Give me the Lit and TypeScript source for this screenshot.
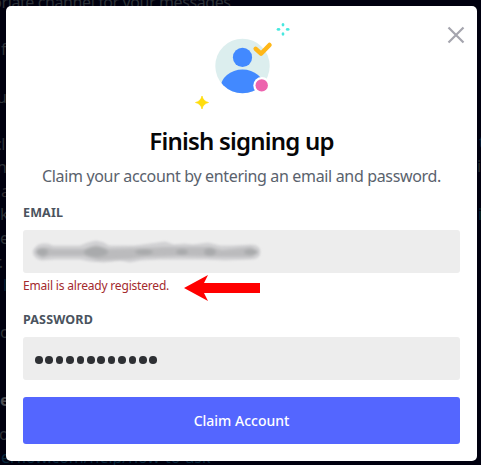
import { LitElement, html, css } from "lit";
import { customElement, property } from "lit/decorators.js";
import { styleMap } from "lit/directives/style-map.js";

interface Fragment {
  text: string;
  x: number;
  y: number;
  color?: string;
  weight?: number;
  spacing?: number;
}

const FRAGMENTS: Fragment[] = [
  { text: "priate channel for your messages", x: -8, y: 8 },
  { text: "f", x: 1, y: 55 },
  { text: "u", x: -3, y: 103 },
  { text: "cl", x: -6, y: 150 },
  { text: "n", x: -3, y: 173 },
  { text: "a", x: 1, y: 197, color: "#302c31" },
  { text: "k", x: 0, y: 220 },
  { text: "e", x: 0, y: 244 },
  { text: "r.", x: -5, y: 268 },
  { text: "l", x: 3, y: 291, color: "#052036" },
  { text: "c", x: 0, y: 338 },
  { text: "e", x: 0, y: 406, color: "#4a4b50", weight: 700 },
  { text: "o", x: -1, y: 440 },
  { text: "erflow.com/help/how-to-ask", x: 1, y: 463, color: "#08293f", spacing: -0.05 },
  { text: "t", x: 479, y: 148, color: "#052a38" },
  { text: "i", x: 477, y: 172, color: "#26292c" },
  { text: "i", x: 478, y: 220, color: "#052a38" },
];

@customElement("page-backdrop")
class PageBackdrop extends LitElement {
  static styles = css`
    :host {
      position: absolute;
      inset: 0;
      overflow: hidden;
      background: #00000f;
      font: 16px/20px "Noto Sans", sans-serif;
      letter-spacing: -0.4px;
      color: #2d3238;
    }
    .fragment {
      position: absolute;
      white-space: nowrap;
    }
  `;
  render() {
    return FRAGMENTS.map(
      (f) => html`<span
        class="fragment"
        style=${styleMap({
          left: `${f.x}px`,
          top: `${f.y - 16}px`,
          color: f.color ?? "",
          fontWeight: f.weight ? String(f.weight) : "",
          letterSpacing: f.spacing !== undefined ? `${f.spacing}px` : "",
        })}
        >${f.text}</span
      >`
    );
  }
}

@customElement("form-field")
class FormField extends LitElement {
  @property() label = "";

  static styles = css`
    :host {
      display: block;
    }
    .label {
      font-size: 12.5px;
      font-weight: 700;
      line-height: 16px;
      letter-spacing: 0.15px;
      color: #4a535e;
      height: 16px;
      margin-bottom: 9px;
      text-transform: uppercase;
    }
    .box {
      display: flex;
      align-items: center;
      height: 43px;
      border-radius: 3px;
      background: #ededed;
      padding-left: 8px;
      box-sizing: border-box;
    }
  `;
  render() {
    return html`<div class="label">${this.label}</div>
      <div class="box"><slot></slot></div>`;
  }
}

@customElement("app-root")
class AppRoot extends LitElement {
  static styles = css`
    :host {
      display: block;
      position: relative;
      width: 481px;
      height: 465px;
      padding: 6px 4px 4px 6px;
      box-sizing: border-box;
      overflow: hidden;
      font-family: "Noto Sans", sans-serif;
    }
    .modal {
      position: relative;
      display: flex;
      flex-direction: column;
      box-sizing: border-box;
      height: 455px;
      padding: 0 17px;
      border-radius: 5px;
      background: #fff;
    }
    .close {
      position: absolute;
      right: 12px;
      top: 20px;
      width: 18px;
      height: 18px;
      padding: 0;
      border: 0;
      background: none;
    }
    .close svg,
    .art {
      display: block;
    }
    .art {
      align-self: center;
      margin-top: 14px;
    }
    h1 {
      margin: 12px 0 0;
      font-size: 24px;
      font-weight: 600;
      line-height: 30px;
      text-align: center;
      color: #060607;
      white-space: nowrap;
      letter-spacing: -0.8px;
    }
    .lead {
      margin: 9px 0 0;
      font-size: 16px;
      line-height: 22px;
      text-align: center;
      color: #5a626d;
      white-space: nowrap;
      letter-spacing: -0.34px;
    }
    .email {
      margin-top: 18px;
    }
    .notice {
      display: flex;
      height: 26px;
      gap: 14px;
    }
    .error {
      width: 147px;
      font-size: 12px;
      line-height: 16px;
      margin-top: 5px;
      color: #a32a2d;
      white-space: nowrap;
      letter-spacing: -0.19px;
    }
    .arrow {
      margin-top: 2px;
    }
    .password {
      margin-top: 13px;
    }
    .dots {
      display: flex;
      gap: 2.8px;
      margin: 3px 0 0 4px;
    }
    .dot {
      width: 7.6px;
      height: 7.6px;
      border-radius: 50%;
      background: #2e3034;
    }
    .submit {
      margin-top: 17px;
      height: 47px;
      flex: none;
      border: 0;
      border-radius: 3px;
      background: #5466ff;
      color: #fff;
      font: 500 14px/20px "Noto Sans", sans-serif;
    }
  `;

  render() {
    return html`
      <page-backdrop></page-backdrop>
      <div class="modal">
        <button class="close" aria-label="Close">
          <svg width="18" height="18" viewBox="0 0 18 18">
            <path d="M1.5 1.5 16.5 16.5M16.5 1.5 1.5 16.5" stroke="#a5a5ae" stroke-width="2.2" />
          </svg>
        </button>
        <svg class="art" width="100" height="94" viewBox="191.5 20 100 94">
          <defs>
            <clipPath id="head"><circle cx="242" cy="66" r="27.2" /></clipPath>
          </defs>
          <circle cx="242" cy="66" r="27.2" fill="#dceeee" />
          <circle cx="242" cy="57.4" r="9.6" fill="#4289ff" />
          <ellipse cx="242" cy="88" rx="22" ry="18.4" fill="#4289ff" clip-path="url(#head)" />
          <circle cx="261.2" cy="85.4" r="8.4" fill="#fff" />
          <circle cx="261.2" cy="85.4" r="6.2" fill="#ed64ae" />
          <path d="M255.2 48.8 260.5 53.7 269 45" fill="none" stroke="#ffb718" stroke-width="4.5" stroke-linecap="round" stroke-linejoin="round" />
          <path d="M201.5 96Q202.7 101.3 208 102.5Q202.7 103.7 201.5 109Q200.3 103.7 195 102.5Q200.3 101.3 201.5 96Z" fill="#ffdd0c" stroke="#ffdd0c" stroke-width=".7" stroke-linejoin="round" />
          <g fill="#48e8df">
            <ellipse cx="282.5" cy="24.8" rx="1.4" ry="1.8" />
            <ellipse cx="282.5" cy="34" rx="1.4" ry="1.8" />
            <ellipse cx="278" cy="29.4" rx="1.9" ry="1.3" />
            <ellipse cx="287.2" cy="29.4" rx="1.9" ry="1.3" />
          </g>
        </svg>
        <h1>Finish signing up</h1>
        <p class="lead">Claim your account by entering an email and password.</p>
        <form-field class="email" label="Email">
          <svg width="234" height="28" viewBox="31 238 234 28">
            <defs>
              <filter id="soft" x="-10%" y="-50%" width="120%" height="200%"><feGaussianBlur stdDeviation="0.8" /></filter>
              <filter id="core" x="-20%" y="-70%" width="140%" height="240%"><feGaussianBlur stdDeviation="1.7" /></filter>
            </defs>
            <path d="M33 252Q35 245 42 244Q48 243 53 246L80 246Q89 242 96 241Q104 242 109 246L135 246L150 244L165 242L174 245L184 244L193 245L208 243L220 246L234 246L251 245Q260 245 260 252Q260 259 251 259L225 260L205 259L180 259L160 259L140 260L130 262L120 260L104 262L90 261L80 259L55 259L42 260Q34 259 33 252Z" fill="#d2d2d4" stroke="#d2d2d4" stroke-width="1" filter="url(#soft)" />
            <g filter="url(#core)" fill="#a9aaac">
              <path d="M36 252Q42 245 53 249L85 249L96 245L108 249L145 248L165 247L210 247L222 250L251 247Q260 252 252 257L224 257L180 256L145 257L130 259L98 260L84 256L50 256L42 258Z" fill="#bbbbbd" />
              <ellipse cx="96" cy="252" rx="12" ry="5" />
              <ellipse cx="42" cy="252" rx="6" ry="4" />
              <ellipse cx="144" cy="252" rx="9" ry="3" />
              <ellipse cx="182" cy="252" rx="6" ry="3" />
              <ellipse cx="210" cy="252" rx="6" ry="4" />
              <ellipse cx="251" cy="252" rx="7" ry="3" />
            </g>
          </svg>
        </form-field>
        <div class="notice">
          <span class="error">Email is already registered.</span>
          <svg class="arrow" width="77" height="26" viewBox="184 275 77 26">
            <path d="M184 288 208 275 204 283H260V293H204L208 301Z" fill="#f00" />
          </svg>
        </div>
        <form-field class="password" label="Password">
          <div class="dots">${Array.from({ length: 12 }, () => html`<i class="dot"></i>`)}</div>
        </form-field>
        <button class="submit">Claim Account</button>
      </div>
    `;
  }
}
